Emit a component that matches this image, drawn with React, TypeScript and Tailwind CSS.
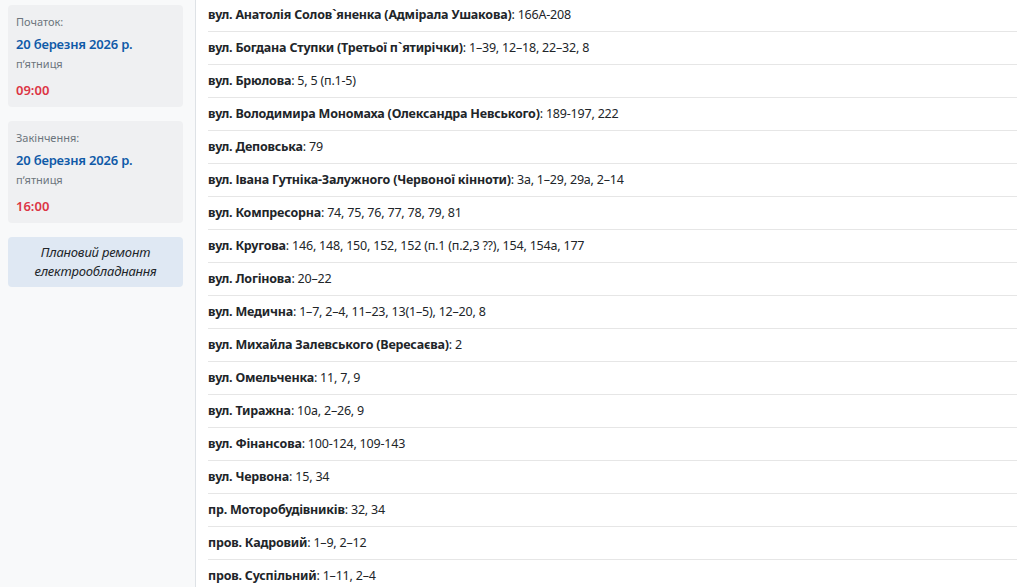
import React from 'react';

interface Street {
    name: string;
    houses: string;
}

const streets: Street[] = [
    { name: 'вул. Анатолія Солов`яненка (Адмірала Ушакова)', houses: '166А-208' },
    { name: 'вул. Богдана Ступки (Третьої п`ятирічки)', houses: '1–39, 12–18, 22–32, 8' },
    { name: 'вул. Брюлова', houses: '5, 5 (п.1-5)' },
    { name: 'вул. Володимира Мономаха (Олександра Невського)', houses: '189-197, 222' },
    { name: 'вул. Деповська', houses: '79' },
    { name: 'вул. Івана Гутніка-Залужного (Червоної кінноти)', houses: '3а, 1–29, 29а, 2–14' },
    { name: 'вул. Компресорна', houses: '74, 75, 76, 77, 78, 79, 81' },
    { name: 'вул. Кругова', houses: '146, 148, 150, 152, 152 (п.1 (п.2,3 ??), 154, 154а, 177' },
    { name: 'вул. Логінова', houses: '20–22' },
    { name: 'вул. Медична', houses: '1–7, 2–4, 11–23, 13(1–5), 12–20, 8' },
    { name: 'вул. Михайла Залевського (Вересаєва)', houses: '2' },
    { name: 'вул. Омельченка', houses: '11, 7, 9' },
    { name: 'вул. Тиражна', houses: '10а, 2–26, 9' },
    { name: 'вул. Фінансова', houses: '100-124, 109-143' },
    { name: 'вул. Червона', houses: '15, 34' },
    { name: 'пр. Моторобудівників', houses: '32, 34' },
    { name: 'пров. Кадровий', houses: '1–9, 2–12' },
    { name: 'пров. Суспільний', houses: '1–11, 2–4' },
];

function TimeCard({ label, date, weekday, time }: { label: string; date: string; weekday: string; time: string }) {
    return (
        <div className="rounded bg-[#eff0f2] px-2 pt-[9px] pb-[7px]">
            <div className="h-4 text-[11px] leading-4 text-[#6c757d]">{label}</div>
            <div className="mt-1 h-5 text-[13px] leading-5 font-semibold tracking-[-0.2px] text-[#0f5aa8]">{date}</div>
            <div className="mt-0.5 h-4 text-[11px] leading-4 text-[#6c757d]">{weekday}</div>
            <div className="mt-2 h-5 text-[13px] leading-5 font-semibold text-[#dc3545]">{time}</div>
        </div>
    );
}

export default function App() {
    return (
        <div className="flex h-[587px] overflow-hidden bg-white text-[#212529] font-['Noto_Sans',sans-serif]">
            <aside className="w-[196px] shrink-0 border-r border-[#dee2e6] bg-[#f8f9fa] pl-2 pr-3 pt-[5px]">
                <div className="flex flex-col gap-[14px]">
                    <TimeCard label="Початок:" date="20 березня 2026 р." weekday="пʼятниця" time="09:00" />
                    <TimeCard label="Закінчення:" date="20 березня 2026 р." weekday="пʼятниця" time="16:00" />
                    <div className="rounded bg-[#dfe8f3] px-2 py-[6px] text-center text-[13px] leading-[19px] italic tracking-[-0.2px]">
                        Плановий ремонт електрообладнання
                    </div>
                </div>
            </aside>

            <main className="flex-1 pl-3 pr-0.5 -mt-px">
                {streets.map((s) => (
                    <div key={s.name} className="flex h-[33px] items-center border-b border-[#e6e6e6] text-[12.5px] tracking-[-0.2px]">
                        <span>
                            <b className="font-bold">{s.name}</b>: {s.houses}
                        </span>
                    </div>
                ))}
            </main>
        </div>
    );
}
